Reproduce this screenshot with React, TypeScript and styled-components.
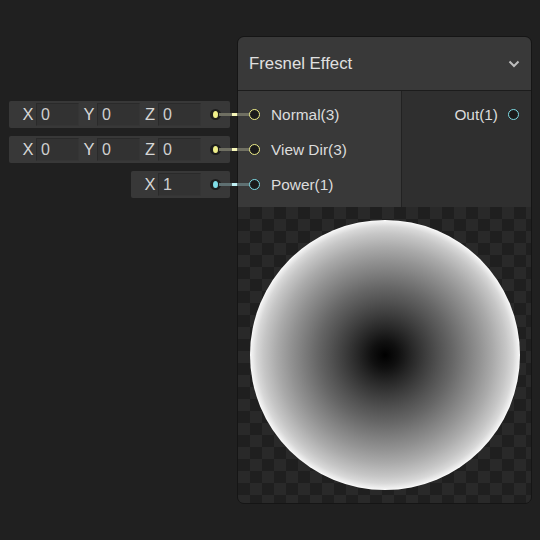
import React from "react";
import styled, { createGlobalStyle } from "styled-components";

const Global = createGlobalStyle`
  html, body { margin: 0; padding: 0; background: #202020; }
  body { font-family: "Liberation Sans", Arial, sans-serif; }
`;

const Canvas = styled.div`
  position: relative;
  width: 540px;
  height: 540px;
  background: #202020;
  overflow: hidden;
`;

const Node = styled.div`
  position: absolute;
  left: 237px;
  top: 36px;
  width: 293px;
  border: 1px solid #151515;
  border-radius: 7px;
  background: #1e1e1e;
  display: flex;
  flex-direction: column;
`;

const Header = styled.div`
  height: 53px;
  background: #393939;
  border-radius: 6px 6px 0 0;
  border-bottom: 1px solid #1c1c1c;
  display: flex;
  align-items: center;
  justify-content: space-between;
  padding: 0 11px 0 11px;
  color: #e0e0e0;
  font-size: 16.8px;
`;

const Ports = styled.div`
  display: grid;
  grid-template-columns: 163px 1px 1fr;
  height: 116px;
`;

const Divider = styled.div`
  background: #222;
`;

const InputCol = styled.div`
  background: #393939;
  padding-top: 6px;
  display: flex;
  flex-direction: column;
`;

const OutputCol = styled.div`
  background: #2f2f2f;
  padding-top: 6px;
  display: flex;
  flex-direction: column;
`;

const PortRow = styled.div<{ $out?: boolean }>`
  position: relative;
  height: 35px;
  display: flex;
  align-items: center;
  gap: ${(p) => (p.$out ? "10px" : "11px")};
  padding: ${(p) => (p.$out ? "0 12px 0 0" : "0 0 0 11px")};
  justify-content: ${(p) => (p.$out ? "flex-end" : "flex-start")};
  color: #dcdcdc;
  font-size: 15.4px;
`;

const Port = styled.span<{ $c: string }>`
  width: 9px;
  height: 9px;
  border-radius: 50%;
  border: 1.8px solid ${(p) => p.$c};
  background: #1b1b1b;
  flex: none;
  position: relative;
  z-index: 2;
`;

const Label = styled.span`
  white-space: nowrap;
`;

const InlineBox = styled.div`
  position: absolute;
  right: calc(100% + 8px);
  top: 4px;
  height: 27px;
  background: #383838;
  border-radius: 2px;
  display: flex;
  align-items: center;
  gap: 2px;
  padding: 0 29px 0 11px;
  box-sizing: border-box;
`;

const Pair = styled.div`
  display: flex;
  align-items: center;
  width: 59px;
`;

const Axis = styled.span`
  width: 16px;
  text-align: center;
  color: #d6d6d6;
  font-size: 16.5px;
`;

const Field = styled.div`
  width: 43px;
  height: 23px;
  box-sizing: border-box;
  background: #323232;
  border: 1px solid #2a2a2a;
  border-bottom-color: #353535;
  border-right-color: #353535;
  color: #cfcfcf;
  font-size: 16px;
  line-height: 21px;
  padding-left: 4px;
`;

const Dot = styled.span<{ $c: string }>`
  position: absolute;
  right: 9px;
  top: 8px;
  width: 11px;
  height: 11px;
  border-radius: 50%;
  background: #1c1c1c;
  display: flex;
  align-items: center;
  justify-content: center;
  &::after {
    content: "";
    width: 5px;
    height: 7px;
    border-radius: 50%;
    background: ${(p) => p.$c};
  }
`;

const Wire = styled.span<{ $dim: string; $bright: string }>`
  position: absolute;
  left: -19px;
  top: 16px;
  width: 32px;
  height: 3px;
  background: linear-gradient(
    to right,
    ${(p) => p.$dim} 0 13px,
    ${(p) => p.$bright} 13px 18px,
    ${(p) => p.$dim} 18px
  );
  z-index: 1;
`;

const Preview = styled.div`
  height: 296px;
  border-radius: 0 0 6px 6px;
  background-color: #1f1f1f;
  background-image: conic-gradient(
    #1f1f1f 25%,
    #292929 0 50%,
    #1f1f1f 0 75%,
    #292929 0
  );
  background-size: 24px 24px;
  display: flex;
  align-items: center;
  justify-content: center;
`;

const Sphere = styled.div`
  width: 270px;
  height: 270px;
  border-radius: 50%;
  margin-top: -1px;
  background: radial-gradient(
    circle closest-side,
    #000 0%,
    #101010 10%,
    #272727 20%,
    #3d3d3d 30%,
    #525252 40%,
    #666 50%,
    #7c7c7c 60%,
    #929292 70%,
    #aaa 80%,
    #c6c6c6 90%,
    #d8d8d8 95%,
    #f2f2f2 99%,
    #fff 100%
  );
`;

const Chevron = () => (
  <svg width="12" height="8" viewBox="0 0 12 8">
    <path d="M1.5 1.5 L6 6 L10.5 1.5" fill="none" stroke="#bdbdbd" strokeWidth="2" />
  </svg>
);

const YELLOW = "#efef8a";
const CYAN = "#7fdce6";

type InputDef = { label: string; axes: string[]; values: string[]; color: string; dim: string; bright: string };

const inputs: InputDef[] = [
  { label: "Normal(3)", axes: ["X", "Y", "Z"], values: ["0", "0", "0"], color: YELLOW, dim: "#6f6f62", bright: "#f6f6b8" },
  { label: "View Dir(3)", axes: ["X", "Y", "Z"], values: ["0", "0", "0"], color: YELLOW, dim: "#6f6f62", bright: "#f6f6b8" },
  { label: "Power(1)", axes: ["X"], values: ["1"], color: CYAN, dim: "#5f7072", bright: "#c0f0f4" },
];

export default function App() {
  return (
    <>
      <Global />
      <Canvas>
        <Node>
          <Header>
            <span>Fresnel Effect</span>
            <Chevron />
          </Header>
          <Ports>
            <InputCol>
              {inputs.map((inp) => (
                <PortRow key={inp.label}>
                  <InlineBox>
                    {inp.axes.map((a, i) => (
                      <Pair key={a}>
                        <Axis>{a}</Axis>
                        <Field>{inp.values[i]}</Field>
                      </Pair>
                    ))}
                    <Dot $c={inp.color} />
                  </InlineBox>
                  <Wire $dim={inp.dim} $bright={inp.bright} />
                  <Port $c={inp.color} />
                  <Label>{inp.label}</Label>
                </PortRow>
              ))}
            </InputCol>
            <Divider />
            <OutputCol>
              <PortRow $out>
                <Label>Out(1)</Label>
                <Port $c={CYAN} />
              </PortRow>
            </OutputCol>
          </Ports>
          <Preview>
            <Sphere />
          </Preview>
        </Node>
      </Canvas>
    </>
  );
}
